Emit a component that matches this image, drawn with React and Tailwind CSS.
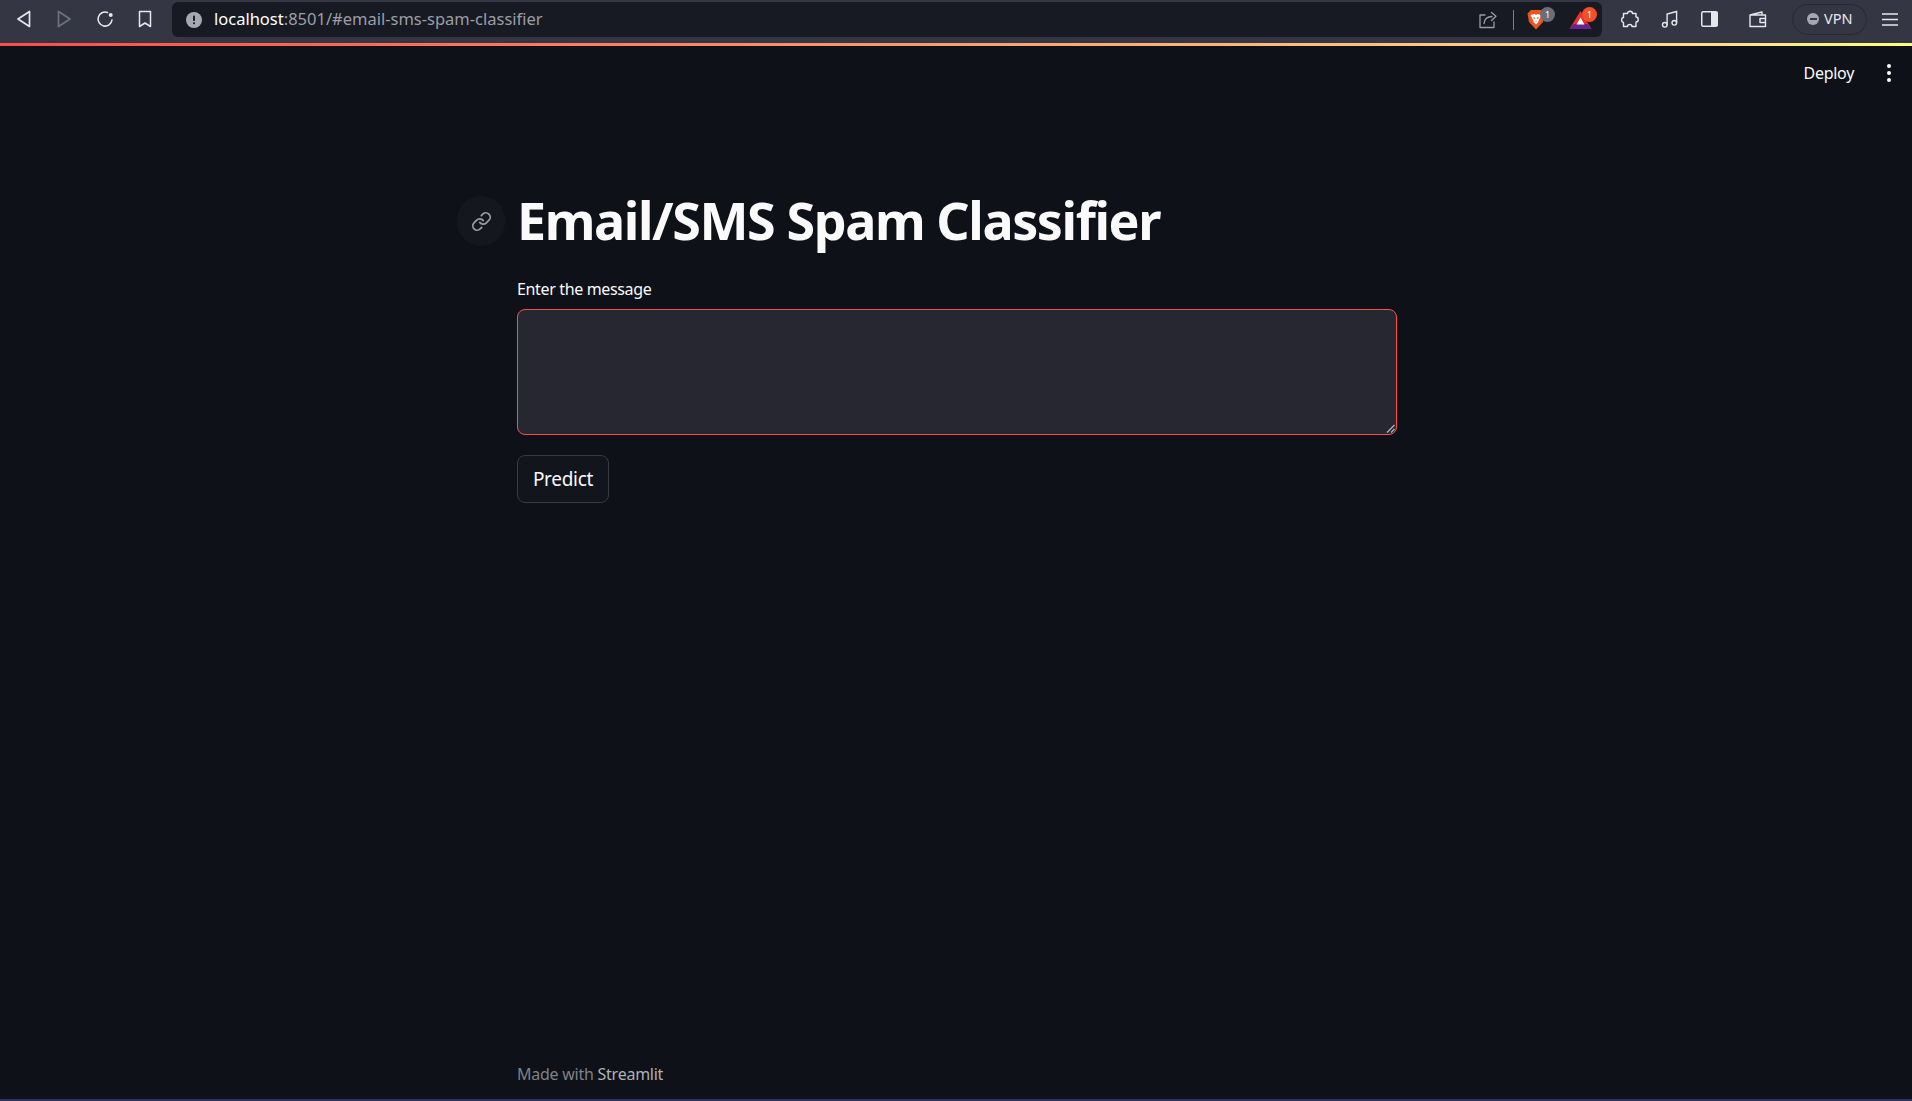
import React from 'react';

function Back() {
  return (
    <svg width="16" height="18" viewBox="0 0 16 18" fill="none" stroke="#e6e7ec" strokeWidth="1.7" strokeLinejoin="round">
      <path d="M13.5 1.5 V16.5 L2 9 Z" />
    </svg>
  );
}
function Forward() {
  return (
    <svg width="16" height="18" viewBox="0 0 16 18" fill="none" stroke="#6e7180" strokeWidth="1.7" strokeLinejoin="round">
      <path d="M2.5 1.5 V16.5 L14 9 Z" />
    </svg>
  );
}
function Reload() {
  return (
    <svg width="18" height="18" viewBox="0 0 18 18" fill="none" stroke="#e6e7ec" strokeWidth="1.6" strokeLinecap="round">
      <path d="M16 10 A7 7 0 1 1 11.5 2.5" />
      <circle cx="14.7" cy="5" r="2" fill="#e6e7ec" stroke="none" />
    </svg>
  );
}
function Bookmark() {
  return (
    <svg width="14" height="18" viewBox="0 0 14 18" fill="none" stroke="#e6e7ec" strokeWidth="1.5" strokeLinejoin="round">
      <path d="M1.5 1.5 H12.5 V16.5 L7 13 L1.5 16.5 Z" />
    </svg>
  );
}
function Info() {
  return (
    <svg width="16" height="16" viewBox="0 0 16 16">
      <circle cx="8" cy="8" r="8" fill="#a6a8b2" />
      <rect x="7" y="3.5" width="2" height="5.5" rx="0.8" fill="#1a1d27" />
      <rect x="7" y="10.2" width="2" height="2" rx="0.8" fill="#1a1d27" />
    </svg>
  );
}
function Share() {
  return (
    <svg width="18" height="18" viewBox="0 0 18 18" fill="none" stroke="#9a9ca5" strokeWidth="1.3" strokeLinecap="round" strokeLinejoin="round">
      <path d="M6 4 H1 V16.5 H15 V11" />
      <path d="M5 12.5 C5.5 8 8.5 5.5 13 5.5 M12.5 1.5 L17 5.3 L12.5 9.5" />
    </svg>
  );
}
function Brave() {
  return (
    <svg width="18" height="22" viewBox="0 0 18 22">
      <path d="M4 1 H14 L17.5 4.5 L16 13 L9 20.5 L2 13 L0.5 4.5 Z" fill="#f1531f" />
      <path d="M3.5 6 L7.5 5 L9 6 L10.5 5 L14.5 6 L12.5 10 L11 13.5 L9 15.5 L7 13.5 L5.5 10 Z" fill="#ffffff" />
      <path d="M6.5 8.5 L8 9.5 M11.5 8.5 L10 9.5 M8.5 12 H9.5" stroke="#f1531f" strokeWidth="1.1" />
    </svg>
  );
}
function Bat() {
  return (
    <svg width="23" height="20" viewBox="0 0 23 20">
      <path d="M11.5 1 L22.5 19 L0.5 19 Z" fill="#e8312a" />
      <path d="M0.5 19 L4.5 14 L18.5 14 L22.5 19 Z" fill="#66248c" />
      <path d="M11.5 7.5 L15.5 14.5 L7.5 14.5 Z" fill="#ffffff" />
    </svg>
  );
}
function Puzzle() {
  return (
    <svg width="18" height="18" viewBox="0 0 18 18" fill="none" stroke="#e6e7ec" strokeWidth="1.4" strokeLinejoin="round">
      <path d="M6.5 3.5 C6.5 0.5 11.5 0.5 11.5 3.5 H15 V7 C18 7 18 12 15 12 V16.5 H11 C11 13.8 6.5 13.8 6.5 16.5 H2.5 V12.5 C0 12.5 0 7.5 2.5 7.5 V3.5 Z" />
    </svg>
  );
}
function Music() {
  return (
    <svg width="18" height="18" viewBox="0 0 18 18" fill="none" stroke="#e6e7ec" strokeWidth="1.4">
      <circle cx="3.8" cy="14.8" r="2.3" />
      <circle cx="13.3" cy="12.8" r="2.3" />
      <path d="M6.1 14.8 V4 L15.6 1.5 V12.8" />
    </svg>
  );
}
function Sidebar() {
  return (
    <svg width="17" height="16" viewBox="0 0 17 16">
      <rect x="0.75" y="0.75" width="15.5" height="14.5" rx="1.5" fill="none" stroke="#e6e7ec" strokeWidth="1.5" />
      <rect x="10" y="1" width="6.5" height="14" fill="#e6e7ec" />
    </svg>
  );
}
function Wallet() {
  return (
    <svg width="18" height="17" viewBox="0 0 18 17" fill="none" stroke="#e6e7ec" strokeWidth="1.4" strokeLinejoin="round">
      <path d="M1 4 L13 1 V4 M1 4 H16.5 V15.5 H1 Z" />
      <path d="M16.5 7.5 H11 V11.5 H16.5" />
    </svg>
  );
}
function Menu() {
  return (
    <svg width="16" height="13" viewBox="0 0 16 13" stroke="#e6e7ec" strokeWidth="1.4">
      <path d="M0 1 H16 M0 6.5 H16 M0 12 H16" />
    </svg>
  );
}
function LinkIcon() {
  return (
    <svg width="21" height="21" viewBox="0 0 24 24" fill="none" stroke="#9a9ca1" strokeWidth="2" strokeLinecap="round" strokeLinejoin="round">
      <path d="M10 13a5 5 0 0 0 7.54.54l3-3a5 5 0 0 0-7.07-7.07l-1.72 1.71" />
      <path d="M14 11a5 5 0 0 0-7.54-.54l-3 3a5 5 0 0 0 7.07 7.07l1.71-1.71" />
    </svg>
  );
}

export default function App() {
  return (
    <div className="w-[1912px] h-[1101px] flex flex-col bg-[#0e1117] overflow-hidden font-['Noto_Sans',sans-serif]">
      {/* Browser toolbar */}
      <div className="h-[43px] shrink-0 flex items-start bg-[#343644]">
        <div className="w-[172px] h-[38px] flex items-center pl-[16px] gap-[24px] shrink-0">
          <Back />
          <Forward />
          <Reload />
          <Bookmark />
        </div>
        <div className="mt-[2px] w-[1430px] h-[35px] flex items-center rounded-[6px] bg-[#171a23] pl-[14px] pr-[10px] shrink-0">
          <Info />
          <span className="ml-[12px] text-[16.5px] tracking-[0px] text-white">localhost<span className="text-[#9c9ea6]">:8501/#email-sms-spam-classifier</span></span>
          <div className="ml-auto flex items-center">
            <Share />
            <div className="ml-[16px] w-px h-[20px] bg-[#7c7e88]" />
            <div className="relative ml-[13px] w-[18px] h-[22px]">
              <Brave />
              <span className="absolute -top-[2px] left-[13px] w-[15px] h-[15px] rounded-full bg-[#6b6d78] text-[9px] leading-[15px] text-center text-white">1</span>
            </div>
            <div className="relative ml-[24px] w-[23px] h-[20px]">
              <Bat />
              <span className="absolute -top-[3px] left-[13px] w-[15px] h-[15px] rounded-full bg-[#f2502a] text-[9px] leading-[15px] text-center text-white">1</span>
            </div>
          </div>
        </div>
        <div className="flex-1 h-[38px] flex items-center pl-[19px] pr-[14px]">
          <Puzzle />
          <div className="ml-[22px]"><Music /></div>
          <div className="ml-[22px]"><Sidebar /></div>
          <div className="ml-[31px]"><Wallet /></div>
          <div className="ml-[25px] w-[75px] h-[31px] rounded-full border border-[#262833] flex items-center pl-[14px] gap-[5px] text-[14.5px] text-[#e8e9ee]">
            <span className="w-[12px] h-[12px] rounded-full bg-[#a5a7b3] flex items-center justify-center"><span className="w-[7px] h-[2px] bg-[#343644]" /></span>
            VPN
          </div>
          <div className="ml-auto"><Menu /></div>
        </div>
      </div>
      {/* Rainbow bar + page */}
      <div className="relative flex-1 flex flex-col">
        <div className="absolute top-0 left-0 right-0 h-[3px] bg-[linear-gradient(90deg,#ff4b4b,#ffe08a_90%,#fffd80)]" />
        <div className="h-[46px] shrink-0 flex items-center justify-end pr-[21px] mt-[7px]">
          <span className="text-[16px] tracking-[-0.3px] text-[#fafafa]">Deploy</span>
          <div className="ml-[33px] flex flex-col gap-[3px]">
            <span className="w-[4px] h-[4px] rounded-full bg-[#fafafa]" />
            <span className="w-[4px] h-[4px] rounded-full bg-[#fafafa]" />
            <span className="w-[4px] h-[4px] rounded-full bg-[#fafafa]" />
          </div>
        </div>
        <div className="flex-1 flex flex-col w-[880px] ml-[517px]">
          <div className="relative mt-[92px] h-[64px] flex items-center">
            <div className="absolute left-[-60px] top-[8px] w-[48px] h-[50px] rounded-full bg-[#14181e] flex items-center justify-center"><LinkIcon /></div>
            <h1 className="text-[52px] leading-[64px] font-bold tracking-[-1.4px] text-[#fafafa]">Email/SMS Spam Classifier</h1>
          </div>
          <label className="mt-[27px] text-[16px] leading-[20px] tracking-[-0.35px] text-[#fafafa]">Enter the message</label>
          <div className="relative mt-[10px] h-[126px] w-[880px] rounded-[8px] border border-[#ff4b4b] bg-[#262730]">
            <svg className="absolute right-0 bottom-0" width="11" height="11" viewBox="0 0 11 11" stroke="#b0b1b8" strokeWidth="1.3">
              <path d="M2 9.5 L9.5 2 M6 9.5 L9.5 6" />
            </svg>
          </div>
          <button className="mt-[20px] w-[92px] h-[48px] rounded-[8px] border border-[#373a43] text-[19px] tracking-[-0.3px] text-[#fafafa] bg-[#12151c]">Predict</button>
          <div className="mt-auto mb-[15px] text-[16px] leading-[20px] tracking-[-0.25px] text-[#7f8187]">Made with <span className="text-[#b0b1b6]">Streamlit</span></div>
        </div>
        <div className="h-[2px] w-full bg-[#2a3566] shrink-0" />
      </div>
    </div>
  );
}
